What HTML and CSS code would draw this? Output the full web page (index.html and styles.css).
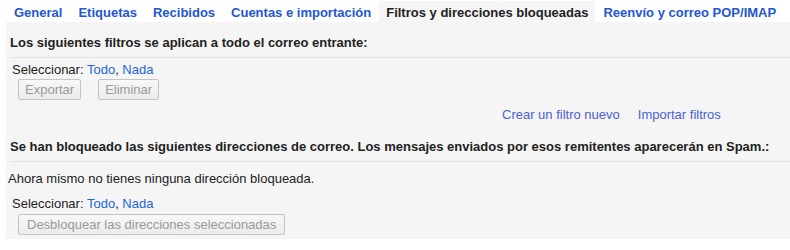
FILE: index.html
```html
<!DOCTYPE html>
<html lang="es">
<head>
<meta charset="utf-8">
<title>Filtros y direcciones bloqueadas</title>
<link rel="stylesheet" href="styles.css">
</head>
<body>
<nav class="tabs">
  <a class="tab" href="#">General</a>
  <a class="tab" href="#">Etiquetas</a>
  <a class="tab" href="#">Recibidos</a>
  <a class="tab" href="#">Cuentas e importación</a>
  <span class="tab tab-active">Filtros y direcciones bloqueadas</span>
  <a class="tab" href="#">Reenvío y correo POP/IMAP</a>
</nav>
<main class="panel">
  <h2 class="section-head">Los siguientes filtros se aplican a todo el correo entrante:</h2>
  <div class="select-row">Seleccionar: <a class="sel-link" href="#">Todo</a>, <a class="sel-link" href="#">Nada</a></div>
  <div class="btn-row">
    <button class="btn btn-small" disabled>Exportar</button>
    <button class="btn btn-small" disabled>Eliminar</button>
  </div>
  <div class="action-links">
    <a class="act-link" href="#">Crear un filtro nuevo</a>
    <a class="act-link" href="#">Importar filtros</a>
  </div>
  <h2 class="section-head section-head-2">Se han bloqueado las siguientes direcciones de correo. Los mensajes enviados por esos remitentes aparecerán en Spam.:</h2>
  <p class="empty-note">Ahora mismo no tienes ninguna dirección bloqueada.</p>
  <div class="select-row select-row-2">Seleccionar: <a class="sel-link" href="#">Todo</a>, <a class="sel-link" href="#">Nada</a></div>
  <div class="btn-row btn-row-2">
    <button class="btn" disabled>Desbloquear las direcciones seleccionadas</button>
  </div>
</main>
</body>
</html>
```
FILE: styles.css
```css
html, body {
  margin: 0;
  padding: 0;
  background: #ffffff;
}
body {
  font-family: Arial, "Liberation Sans", sans-serif;
  font-size: 13px;
  line-height: 15px;
  color: #222222;
}
a { text-decoration: none; }

.tabs {
  display: flex;
  margin-left: 6px;
  padding-top: 1px;
}
.tab {
  display: block;
  padding: 4px 8px 2px 8px;
  font-weight: bold;
  color: #2356d2;
}
.tab-active {
  background: #f5f5f5;
  color: #222222;
  padding: 4px 7px 2px 7px;
}

.panel {
  margin-left: 6px;
  background: #f5f5f5;
  height: 217px;
  padding-left: 4px;
  box-sizing: border-box;
}
.section-head {
  margin: 0;
  font-size: 13px;
  font-weight: bold;
  line-height: 15px;
  padding: 13px 0 7px 0;
  border-bottom: 1px solid #e3e3e3;
}
.section-head-2 {
  padding: 17px 0 7px 0;
}
.select-row {
  padding: 4px 0 0 2px;
}
.select-row-2 {
  padding-top: 10px;
}
.sel-link { color: #2266dd; }

.btn-row {
  display: flex;
  gap: 17px;
  padding: 2px 0 0 8px;
}
.btn-row-2 {
  padding-top: 3px;
}
.btn {
  font-family: Arial, "Liberation Sans", sans-serif;
  font-size: 13px;
  line-height: 15px;
  height: 21px;
  padding: 1px 8px;
  color: #9a9a9a;
  background: linear-gradient(#f8f8f8, #ebebeb);
  border: 1px solid #c4c4c4;
  border-radius: 2px;
}
.btn-small {
  padding: 1px 6px;
}
.action-links {
  display: flex;
  gap: 18px;
  padding: 7px 0 0 492px;
}
.act-link { color: #4a5fd6; }

.empty-note {
  margin: 0;
  padding: 9px 0 0 0;
  margin-left: -2px;
}
```
